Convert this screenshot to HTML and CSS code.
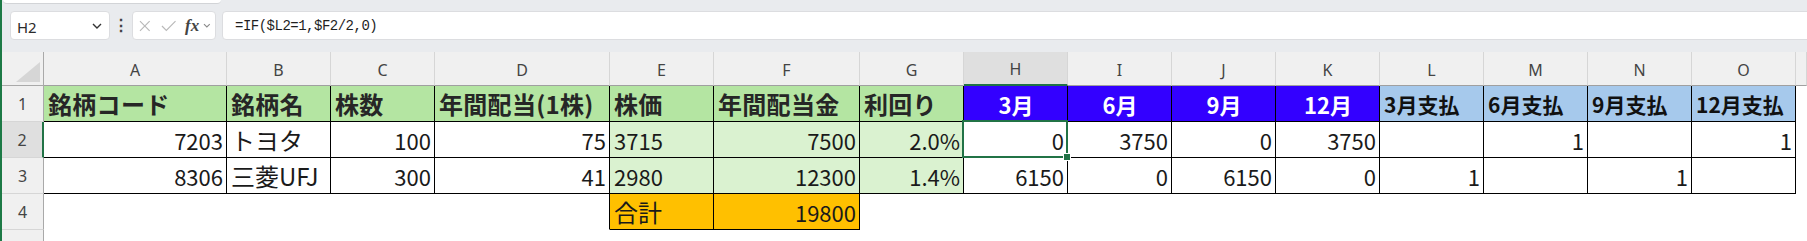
FILE: index.html
```html
<!DOCTYPE html>
<html lang="ja">
<head>
    <meta charset="UTF-8">
    <meta name="viewport" content="width=device-width, initial-scale=1.0">
    <title>配当カレンダー</title>
    <link rel="stylesheet" href="styles.css">
</head>
<body>
<div class="window">
    <div class="ribbon-tail"></div>

    <div class="formula-row">
        <div class="name-box">
            <span>H2</span>
            <svg class="chev" width="10" height="6" viewBox="0 0 10 6"><polyline points="1,1 5,5 9,1" /></svg>
        </div>
        <div class="grip">⋮</div>
        <div class="fx-box">
            <svg class="cancel" width="12" height="12" viewBox="0 0 12 12"><path d="M1 1 L11 11 M11 1 L1 11" /></svg>
            <svg class="enter" width="16" height="12" viewBox="0 0 16 12"><polyline points="1,6 5.5,10.5 15,1" /></svg>
            <span class="fx">fx</span>
            <svg class="chev light" width="8" height="5" viewBox="0 0 8 5"><polyline points="1,1 4,4 7,1" /></svg>
        </div>
        <div class="formula">=IF($L2=1,$F2/2,0)</div>
    </div>

    <div class="sheet">
        <!-- column headers -->
        <div class="corner"></div>
        <div class="col-head">A</div>
        <div class="col-head">B</div>
        <div class="col-head">C</div>
        <div class="col-head">D</div>
        <div class="col-head">E</div>
        <div class="col-head">F</div>
        <div class="col-head">G</div>
        <div class="col-head active">H</div>
        <div class="col-head">I</div>
        <div class="col-head">J</div>
        <div class="col-head">K</div>
        <div class="col-head">L</div>
        <div class="col-head">M</div>
        <div class="col-head">N</div>
        <div class="col-head">O</div>
        <div class="col-head"></div>

        <!-- row 1 -->
        <div class="row-head">1</div>
        <div class="c b hd">銘柄コード</div>
        <div class="c b hd">銘柄名</div>
        <div class="c b hd">株数</div>
        <div class="c b hd">年間配当(1株)</div>
        <div class="c b hd">株価</div>
        <div class="c b hd">年間配当金</div>
        <div class="c b hd">利回り</div>
        <div class="c b month">3月</div>
        <div class="c b month">6月</div>
        <div class="c b month">9月</div>
        <div class="c b month">12月</div>
        <div class="c b pay">3月支払</div>
        <div class="c b pay">6月支払</div>
        <div class="c b pay">9月支払</div>
        <div class="c b pay">12月支払</div>
        <div class="c"></div>

        <!-- row 2 -->
        <div class="row-head active">2</div>
        <div class="c b num">7203</div>
        <div class="c b ja">トヨタ</div>
        <div class="c b num">100</div>
        <div class="c b num">75</div>
        <div class="c b lg">3715</div>
        <div class="c b lg num">7500</div>
        <div class="c b lg num">2.0%</div>
        <div class="c b num selected">0<span class="sel-box"><span class="handle"></span></span></div>
        <div class="c b num">3750</div>
        <div class="c b num">0</div>
        <div class="c b num">3750</div>
        <div class="c b num"></div>
        <div class="c b num">1</div>
        <div class="c b num"></div>
        <div class="c b num">1</div>
        <div class="c"></div>

        <!-- row 3 -->
        <div class="row-head">3</div>
        <div class="c b num">8306</div>
        <div class="c b ja">三菱UFJ</div>
        <div class="c b num">300</div>
        <div class="c b num">41</div>
        <div class="c b lg">2980</div>
        <div class="c b lg num">12300</div>
        <div class="c b lg num">1.4%</div>
        <div class="c b num">6150</div>
        <div class="c b num">0</div>
        <div class="c b num">6150</div>
        <div class="c b num">0</div>
        <div class="c b num">1</div>
        <div class="c b num"></div>
        <div class="c b num">1</div>
        <div class="c b num"></div>
        <div class="c"></div>

        <!-- row 4 -->
        <div class="row-head">4</div>
        <div class="c"></div>
        <div class="c"></div>
        <div class="c"></div>
        <div class="c edge-r"></div>
        <div class="c b sum ja">合計</div>
        <div class="c b sum num">19800</div>
        <div class="c"></div>
        <div class="c"></div>
        <div class="c"></div>
        <div class="c"></div>
        <div class="c"></div>
        <div class="c"></div>
        <div class="c"></div>
        <div class="c"></div>
        <div class="c"></div>
        <div class="c"></div>

        <!-- row 5, only its top shows -->
        <div class="row-head">5</div>
    </div>
</div>
</body>
</html>
```

FILE: styles.css
```css
html, body {
    margin: 0;
    padding: 0;
    background: #fff;
    overflow: hidden;
}
.window {
    height: 241px;
    overflow: hidden;
    border-left: 2px solid #1d7a46; /* excel window edge */
    background: #e9ebee;
    font-family: "Noto Sans", "Noto Sans CJK JP", sans-serif;
}

/* bottom of the ribbon panel */
.ribbon-tail {
    width: 218px;
    height: 3px;
    margin-left: 1px;
    background: #fff;
    border-bottom: 1px solid #d2d4d7;
    border-radius: 0 0 5px 5px;
}

/* name box + formula bar */
.formula-row {
    display: flex;
    align-items: flex-start;
    height: 44px;
    padding: 7px 0 0 8px;
    box-sizing: border-box;
}
.name-box, .fx-box, .formula {
    height: 29px;
    box-sizing: border-box;
    background: #fff;
    border: 1px solid #dcdde0;
    border-radius: 4px;
    display: flex;
    align-items: center;
}
.name-box {
    width: 100px;
    padding: 0 7px 0 6px;
    justify-content: space-between;
    font-size: 15px;
    color: #2b2b2b;
}
.name-box span {
    padding-top: 2px;
}
.chev polyline {
    fill: none;
    stroke: #333;
    stroke-width: 1.4;
}
.chev.light polyline {
    stroke: #8a8a8a;
    stroke-width: 1.1;
}
.grip {
    width: 22px;
    text-align: center;
    font-size: 16px;
    font-weight: bold;
    line-height: 29px;
    color: #444;
}
.fx-box {
    width: 84px;
    padding: 0 4px 0 6px;
}
.cancel path, .enter polyline {
    fill: none;
    stroke: #b9b9b9;
    stroke-width: 1.2;
}
.enter {
    margin-left: 10px;
}
.fx {
    margin-left: 9px;
    font-family: "Liberation Serif", serif;
    font-style: italic;
    font-weight: bold;
    font-size: 17px;
    color: #444;
    line-height: 1;
}
.fx-box .chev {
    margin-left: 4px;
}
.formula {
    flex: 1;
    margin-left: 6px;
    margin-right: -10px;
    padding-left: 12px;
    font-family: "Liberation Mono", monospace;
    font-size: 14px;
    letter-spacing: -0.5px;
    color: #1f1f1f;
}

/* the worksheet grid */
.sheet {
    margin-top: 4px;
    background: #fff;
    display: grid;
    grid-template-columns: 42px 183px 104px 104px 175px 104px 146px 104px repeat(8, 104px) 1fr;
    grid-template-rows: 34px repeat(5, 36px);
}
.corner, .col-head, .row-head {
    background: #f0f0f0;
    box-sizing: border-box;
    color: #444;
    font-family: "Noto Sans", sans-serif;
    font-size: 16px;
    display: flex;
    align-items: center;
    justify-content: center;
}
.corner {
    position: relative;
    border-right: 1px solid #a9a9a9;
    border-bottom: 1px solid #a9a9a9;
}
.corner::after {
    content: "";
    position: absolute;
    right: 3px;
    bottom: 3px;
    border-left: 24px solid transparent;
    border-bottom: 20px solid #d6d6d6;
}
.col-head {
    border-right: 1px solid #d6d6d6;
    border-bottom: 1px solid #a0a0a0;
    padding-top: 2px;
}
.col-head.active {
    background: #dfdfdf;
    border-bottom: 2px solid #217346;
}
.row-head {
    border-right: 1px solid #a9a9a9;
    border-bottom: 1px solid #d6d6d6;
}
.row-head.active {
    background: #dfdfdf;
    border-right: 2px solid #217346;
}

/* cells */
.c {
    box-sizing: border-box;
    border-right: 1px solid transparent;
    border-bottom: 1px solid transparent;
    padding: 0 3px 0 4px;
    display: flex;
    align-items: center;
    font-family: "Noto Sans CJK JP", sans-serif;
    font-size: 22px;
    color: #1a1a1a;
    white-space: nowrap;
    overflow: hidden;
}
.c.b {
    border-right-color: #000;
    border-bottom-color: #000;
}
.c.edge-r {
    border-right-color: #000;
}
.num {
    justify-content: flex-end;
}
.ja {
    font-size: 24px;
}
.hd {
    background: #b4e5a2;
    font-size: 24px;
    font-weight: bold;
    letter-spacing: 0.3px;
    color: #262626;
}
.lg {
    background: #daf2d0;
}
.month {
    background: #3300ff;
    color: #fff;
    font-size: 22px;
    font-weight: bold;
    justify-content: center;
}
.pay {
    background: #a6c9ec;
    font-size: 21px;
    font-weight: bold;
    color: #111;
}
.sum {
    background: #ffc000;
}

/* active cell outline */
.selected {
    position: relative;
    overflow: visible;
}
.sel-box {
    position: absolute;
    left: -2px;
    top: -2px;
    right: -1px;
    bottom: -1px;
    border: 2px solid #217346;
    pointer-events: none;
}
.handle {
    position: absolute;
    right: -5px;
    bottom: -5px;
    width: 6px;
    height: 6px;
    background: #217346;
    border: 1px solid #fff;
}
```
